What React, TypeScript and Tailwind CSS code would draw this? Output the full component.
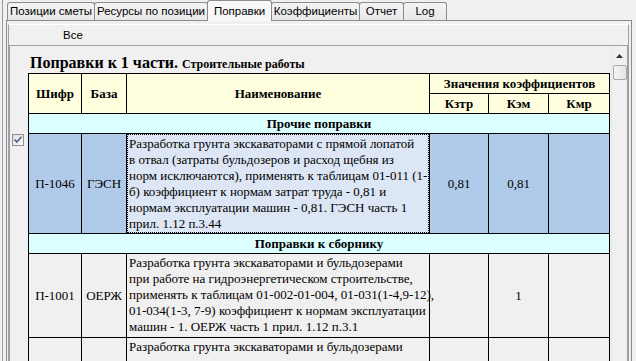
import React from "react";

const tabs = [
  { label: "Позиции сметы", w: 88 },
  { label: "Ресурсы по позиции", w: 114 },
  { label: "Поправки", w: 65, active: true },
  { label: "Коэффициенты", w: 89 },
  { label: "Отчет", w: 45 },
  { label: "Log", w: 44 },
];

function CheckBox() {
  return (
    <svg width="12" height="12" viewBox="0 0 12 12">
      <defs>
        <linearGradient id="cbg" x1="0" y1="0" x2="1" y2="1">
          <stop offset="0" stopColor="#dcdcdc" />
          <stop offset="1" stopColor="#ffffff" />
        </linearGradient>
      </defs>
      <rect x="0.5" y="0.5" width="11" height="11" fill="url(#cbg)" stroke="#8e8f8f" />
      <path d="M2.5 5.5 L4.8 8 L9.5 2.8" fill="none" stroke="#4a5f97" strokeWidth="1.6" />
    </svg>
  );
}

export default function App() {
  return (
    <div className="w-[636px] h-[361px] overflow-hidden bg-[#f0f0f0] flex pl-[2px] [font-family:Liberation_Sans,Arial,sans-serif] text-black">
      <div className="border-l border-[#9a9a9a] pl-[3px] flex">
        <div className="w-[626px] flex flex-col">
          {/* tab strip */}
          <div className="h-[23px] flex items-end pl-px">
            {tabs.map((t, i) =>
              t.active ? (
                <div
                  key={i}
                  style={{ width: t.w }}
                  className="relative z-10 -ml-px -mb-px h-[21px] border border-b-0 border-[#898c95] rounded-t-[3px] bg-[#f8f8f8] text-[11.5px] leading-[18px] text-center pt-[1px] whitespace-nowrap"
                >
                  {t.label}
                </div>
              ) : (
                <div
                  key={i}
                  style={{ width: t.w }}
                  className={`${i > 0 ? "-ml-px" : ""} h-[18px] border border-b-0 border-[#898c95] rounded-t-[3px] bg-gradient-to-b from-[#f4f4f4] to-[#e8e8e8] text-[11.5px] leading-[17px] text-center whitespace-nowrap`}
                >
                  {t.label}
                </div>
              )
            )}
          </div>
          {/* panel */}
          <div className="flex-1 border border-b-0 border-[#898c95] bg-[#f0f0f0] pt-[3px] pl-px pr-[2px] flex flex-col">
            <div className="flex-1 border-t border-t-white border-l border-r border-[#a0a0a0] flex flex-col">
              <div className="h-[20px] pl-[54px] text-[11.5px] leading-[20px]">Все</div>
              <div className="flex-1 border-t border-l border-r border-[#a0a0a0] flex">
                <div className="flex-1 flex flex-col [font-family:Liberation_Serif,serif]">
                  <div className="h-[27px] pt-[7px] pl-[20px] font-bold leading-[20px] text-black whitespace-nowrap">
                    <span className="text-[16px]">Поправки к 1 части.</span>{" "}
                    <span className="text-[12px]">Строительные работы</span>
                  </div>
                  <div className="flex">
                    <div className="w-[18px] pt-[61px] pl-[2px]">
                      <CheckBox />
                    </div>
                    <table className="[font-family:Liberation_Serif,serif] table-fixed border-collapse w-[581px] text-[13px] leading-[16px] text-black">
                      <colgroup>
                        <col className="w-[53px]" />
                        <col className="w-[45px]" />
                        <col className="w-[303px]" />
                        <col className="w-[59px]" />
                        <col className="w-[60px]" />
                        <col className="w-[61px]" />
                      </colgroup>
                      <tbody>
                        <tr className="h-[20px] bg-[#ffffe0] font-bold">
                          <td rowSpan={2} className="border border-black text-center">Шифр</td>
                          <td rowSpan={2} className="border border-black text-center">База</td>
                          <td rowSpan={2} className="border border-black text-center">Наименование</td>
                          <td colSpan={3} className="border border-black text-center whitespace-nowrap">Значения коэффициентов</td>
                        </tr>
                        <tr className="h-[20px] bg-[#ffffe0] font-bold">
                          <td className="border border-black text-center">Кзтр</td>
                          <td className="border border-black text-center">Кэм</td>
                          <td className="border border-black text-center">Кмр</td>
                        </tr>
                        <tr className="h-[20px] bg-[#dcffff] font-bold">
                          <td colSpan={6} className="border border-black text-center">Прочие поправки</td>
                        </tr>
                        <tr className="h-[100px] bg-[#b0cbe9]">
                          <td className="border border-black text-center">П-1046</td>
                          <td className="border border-black text-center">ГЭСН</td>
                          <td className="border border-black p-0 align-top">
                            <div className="h-[99px] bg-[#dce6f4] border border-dotted border-black pl-px pt-px whitespace-nowrap">
                              Разработка грунта экскаваторами с прямой лопатой<br />
                              в отвал (затраты бульдозеров и расход щебня из<br />
                              норм исключаются), применять к таблицам 01-011 (1-<br />
                              б) коэффициент к нормам затрат труда - 0,81 и<br />
                              нормам эксплуатации машин - 0,81. ГЭСН часть 1<br />
                              прил. 1.12 п.3.44
                            </div>
                          </td>
                          <td className="border border-black text-center">0,81</td>
                          <td className="border border-black text-center">0,81</td>
                          <td className="border border-black text-center"></td>
                        </tr>
                        <tr className="h-[20px] bg-[#dcffff] font-bold">
                          <td colSpan={6} className="border border-black text-center">Поправки к сборнику</td>
                        </tr>
                        <tr className="h-[84px]">
                          <td className="border border-black text-center">П-1001</td>
                          <td className="border border-black text-center">ОЕРЖ</td>
                          <td className="border border-black pl-[2px] pt-px align-top whitespace-nowrap">
                            Разработка грунта экскаваторами и бульдозерами<br />
                            при работе на гидроэнергетическом строительстве,<br />
                            применять к таблицам 01-002-01-004, 01-031(1-4,9-12),<br />
                            01-034(1-3, 7-9) коэффициент к нормам эксплуатации<br />
                            машин - 1. ОЕРЖ часть 1 прил. 1.12 п.3.1
                          </td>
                          <td className="border border-black text-center"></td>
                          <td className="border border-black text-center">1</td>
                          <td className="border border-black text-center"></td>
                        </tr>
                        <tr className="h-[30px]">
                          <td className="border border-black"></td>
                          <td className="border border-black"></td>
                          <td className="border border-black pl-[2px] pt-px align-top whitespace-nowrap">
                            Разработка грунта экскаваторами и бульдозерами
                          </td>
                          <td className="border border-black"></td>
                          <td className="border border-black"></td>
                          <td className="border border-black"></td>
                        </tr>
                      </tbody>
                    </table>
                  </div>
                </div>
                {/* scrollbar */}
                <div className="w-[16px] border-l border-[#e6e6e6] bg-[#f0f0f0] flex flex-col items-center">
                  <div className="h-[19px] flex items-center justify-center">
                    <svg width="7" height="4" viewBox="0 0 7 4">
                      <path d="M0 4 L3.5 0 L7 4 Z" fill="#333" />
                    </svg>
                  </div>
                  <div className="w-[14px] h-[15px] rounded-[2px] border border-[#a8a8a8] bg-gradient-to-r from-[#f4f4f4] to-[#e4e4e4]"></div>
                </div>
              </div>
            </div>
          </div>
        </div>
      </div>
    </div>
  );
}
